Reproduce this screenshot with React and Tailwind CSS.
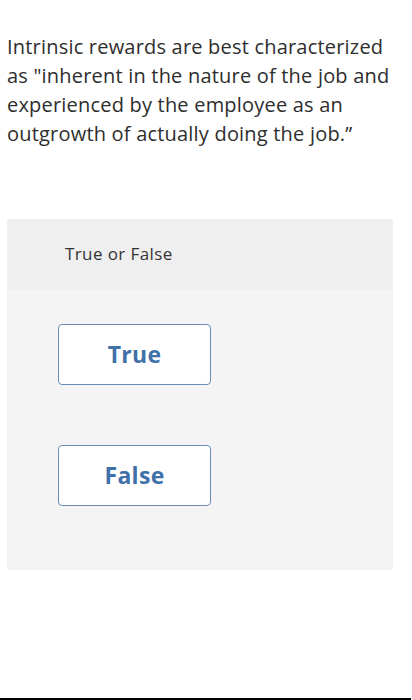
import React from 'react';

const Choice = ({label}) => (
    <button className="flex items-center justify-center w-[153px] h-[61px] bg-white border-[1.5px] border-[#6b8db3] rounded-[4px] text-[23px] font-bold tracking-[0.3px] text-[#3f70a8]">
        {label}
    </button>
);

const App = () => {
    return (
        <div className="w-[412px] h-[700px] bg-white relative font-['Open_Sans',sans-serif]">
            <div className="pt-[32px] pl-[7px] w-[405px] text-[20px] tracking-[0.2px] leading-[29px] text-[#2e2e2e]">
                Intrinsic rewards are best characterized as "inherent in the nature of the job and experienced by the employee as an outgrowth of actually doing the job.”
            </div>
            <div className="mt-[71px] mx-[7px] w-[386px] rounded-[3px] overflow-hidden bg-[#f4f4f5]">
                <div className="h-[70px] bg-[#efefef] flex items-center pl-[58px] text-[17px] tracking-[0.4px] text-[#333333]">
                    True or False
                </div>
                <div className="pl-[51px] pt-[35px] pb-[64px] flex flex-col gap-[60px]">
                    <Choice label="True" />
                    <Choice label="False" />
                </div>
            </div>
            <div className="absolute left-0 bottom-0 w-[411px] h-[2px] bg-black" />
        </div>
    );
};

export default App;
